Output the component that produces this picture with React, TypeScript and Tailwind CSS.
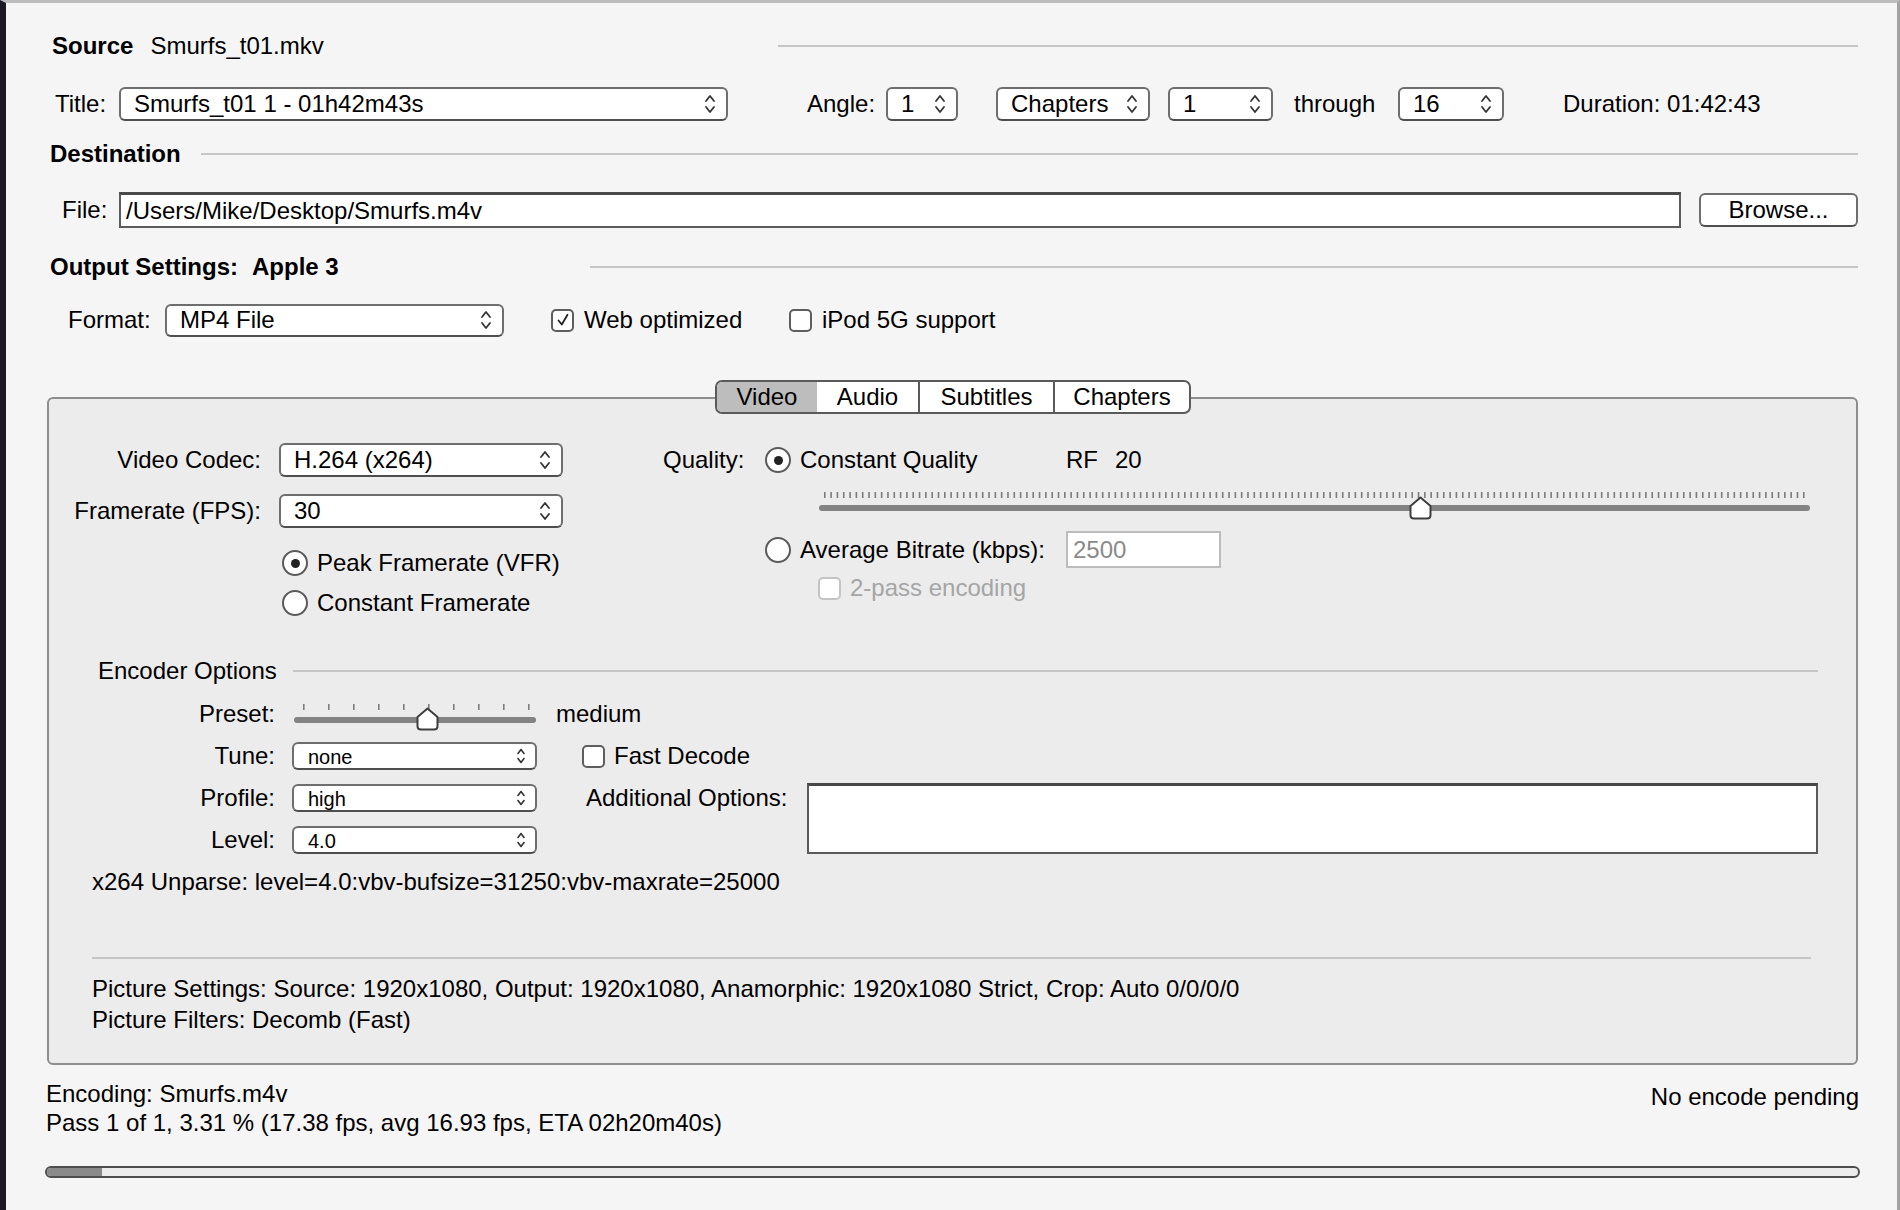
import React from "react";

function Stepper({ small = false }: { small?: boolean }) {
  return small ? (
    <svg width="10" height="18" viewBox="0 0 10 18" className="shrink-0">
      <path d="M2 6.5 L5 2.5 L8 6.5 M2 11.5 L5 15.5 L8 11.5" fill="none" stroke="#333" strokeWidth="1.6" strokeLinecap="round" strokeLinejoin="round" />
    </svg>
  ) : (
    <svg width="12" height="24" viewBox="0 0 12 24" className="shrink-0">
      <path d="M2 9 L6 4 L10 9 M2 15 L6 20 L10 15" fill="none" stroke="#333" strokeWidth="1.8" strokeLinecap="round" strokeLinejoin="round" />
    </svg>
  );
}

function Select({ cls, value }: { cls: string; value: string }) {
  return (
    <div className={`flex items-center justify-between bg-white border-2 border-[#6e6e6e] border-b-[#4e4e4e] rounded-[6px] pl-[13px] pr-[10px] shrink-0 ${cls}`}>
      <span className="leading-none whitespace-nowrap">{value}</span>
      <Stepper />
    </div>
  );
}

function SmallSelect({ value }: { value: string }) {
  return (
    <div className="ml-[17px] w-[245px] h-[28px] flex items-center justify-between bg-white border-2 border-[#6e6e6e] border-b-[#4e4e4e] rounded-[6px] pl-[14px] pr-[9px]">
      <span className="leading-none text-[20px] pt-[2px]">{value}</span>
      <Stepper small />
    </div>
  );
}

function Checkbox({ checked = false, disabled = false }: { checked?: boolean; disabled?: boolean }) {
  return (
    <div
      className={`w-[23px] h-[23px] rounded-[5px] border-2 bg-white flex items-center justify-center shrink-0 ${
        disabled ? "border-[#c4c4c4]" : "border-[#5e5e5e]"
      }`}
    >
      {checked && (
        <svg width="16" height="16" viewBox="0 0 16 16">
          <path d="M3.5 8.5 L6.8 12.5 L12.5 2.8" fill="none" stroke="#222" strokeWidth="1.8" strokeLinecap="round" strokeLinejoin="round" />
        </svg>
      )}
    </div>
  );
}

function Radio({ checked = false }: { checked?: boolean }) {
  return (
    <div className="w-[26px] h-[26px] rounded-full border-2 border-[#5a5a5a] bg-white flex items-center justify-center shrink-0">
      {checked && <div className="w-[9px] h-[9px] rounded-full bg-[#222]" />}
    </div>
  );
}

function Thumb() {
  return (
    <svg width="23" height="24" viewBox="0 0 23 24">
      <path d="M1.5 10 L11.5 1.5 L21.5 10 V19 Q21.5 22.5 18 22.5 H5 Q1.5 22.5 1.5 19 Z" fill="#fff" stroke="#3e3e3e" strokeWidth="2" strokeLinejoin="round" />
    </svg>
  );
}

function QualitySlider() {
  const n = 156;
  const ticks = Array.from({ length: n }, (_, i) => 5 + (i * (979 / (n - 1))));
  return (
    <div className="relative ml-[156px] w-[991px] h-[30px]">
      <svg width="991" height="30" viewBox="0 0 991 30" className="absolute left-0 top-0">
        {ticks.map((x, i) => (
          <rect key={i} x={x} y={2} width={1.6} height={6} fill="#7c7c7c" />
        ))}
        <rect x={0} y={15} width={991} height={6} rx={3} fill="#838383" />
      </svg>
      <div className="absolute left-[590px] top-[6px]">
        <Thumb />
      </div>
    </div>
  );
}

function PresetSlider() {
  const ticks = Array.from({ length: 10 }, (_, i) => 9 + i * 25);
  return (
    <div className="relative ml-[19px] w-[242px] h-[28px]">
      <svg width="242" height="28" viewBox="0 0 242 28" className="absolute left-0 top-0">
        {ticks.map((x, i) => (
          <rect key={i} x={x} y={4} width={1.6} height={6} fill="#7c7c7c" />
        ))}
        <rect x={0} y={17} width={242} height={6} rx={3} fill="#838383" />
      </svg>
      <div className="absolute left-[122px] top-[7px]">
        <Thumb />
      </div>
    </div>
  );
}

export default function App() {
  return (
    <div className="w-[1900px] h-[1210px] overflow-hidden bg-[#f5f5f5] border-l-[6px] border-l-[#1c1922] border-t-[3px] border-t-[#bdbdbd] border-r-[3px] border-r-[#a3a3a3] font-['Liberation_Sans',Arial,sans-serif] text-[24px] text-black leading-none">
      <div className="pl-[41px] pr-[39px]">
        {/* Source */}
        <div className="mt-[26px] h-[34px] flex items-center pl-[5px]">
          <span className="font-bold">Source</span>
          <span className="ml-[17px]">Smurfs_t01.mkv</span>
          <div className="ml-auto w-[1080px] h-[2px] bg-[#c6c6c6]" />
        </div>

        {/* Title row */}
        <div className="mt-[24px] h-[34px] flex items-center pl-[8px]">
          <span className="w-[64px] shrink-0">Title:</span>
          <Select cls="w-[609px] h-[34px]" value="Smurfs_t01 1 - 01h42m43s" />
          <span className="ml-[79px] w-[79px] shrink-0">Angle:</span>
          <Select cls="w-[72px] h-[34px]" value="1" />
          <Select cls="ml-[38px] w-[154px] h-[34px]" value="Chapters" />
          <Select cls="ml-[18px] w-[105px] h-[34px]" value="1" />
          <span className="ml-[21px] w-[104px] shrink-0">through</span>
          <Select cls="w-[106px] h-[34px]" value="16" />
          <span className="ml-[59px] whitespace-nowrap">Duration: 01:42:43</span>
        </div>

        {/* Destination */}
        <div className="mt-[18px] h-[30px] flex items-center pl-[3px]">
          <span className="w-[151px] shrink-0 font-bold">Destination</span>
          <div className="flex-1 h-[2px] bg-[#c6c6c6]" />
        </div>

        {/* File */}
        <div className="mt-[22px] h-[38px] flex items-center pl-[15px]">
          <span className="w-[57px] shrink-0">File:</span>
          <div className="w-[1562px] h-[36px] bg-white border-2 border-[#5c5c5c] border-t-[3px] border-t-[#4a4a4a] flex items-center pl-[5px]">
            /Users/Mike/Desktop/Smurfs.m4v
          </div>
          <div className="ml-[18px] w-[159px] h-[34px] bg-white border-2 border-[#6e6e6e] border-b-[#4e4e4e] rounded-[6px] flex items-center justify-center">
            Browse...
          </div>
        </div>

        {/* Output settings */}
        <div className="mt-[23px] h-[30px] flex items-center pl-[3px]">
          <span className="w-[202px] shrink-0 font-bold">Output Settings:</span>
          <span className="w-[338px] shrink-0 font-bold">Apple 3</span>
          <div className="flex-1 h-[2px] bg-[#c6c6c6]" />
        </div>

        {/* Format */}
        <div className="mt-[21px] h-[34px] flex items-center pl-[21px]">
          <span className="w-[97px] shrink-0">Format:</span>
          <Select cls="w-[339px] h-[33px]" value="MP4 File" />
          <div className="ml-[47px]">
            <Checkbox checked />
          </div>
          <span className="ml-[10px] w-[205px] shrink-0">Web optimized</span>
          <Checkbox />
          <span className="ml-[10px]">iPod 5G support</span>
        </div>

        {/* Tabs */}
        <div className="mt-[43px] pl-[668px] relative z-10 flex">
          <div className="flex h-[34px] border-2 border-[#5a5a5a] rounded-[7px] overflow-hidden bg-white">
            <div className="w-[100px] bg-[#bdbdbd] flex items-center justify-center">Video</div>
            <div className="w-[101px] flex items-center justify-center">Audio</div>
            <div className="w-[135px] border-l-2 border-[#5a5a5a] flex items-center justify-center">Subtitles</div>
            <div className="w-[136px] border-l-2 border-[#5a5a5a] flex items-center justify-center">Chapters</div>
          </div>
        </div>

        <div className="-mt-[17px] h-[668px] border-2 border-[#8e8e8e] rounded-[6px] bg-[#ececec]">
          {/* top section */}
          <div className="flex pt-[44px]">
            <div className="w-[614px] shrink-0 flex flex-col">
              <div className="h-[34px] flex items-center">
                <span className="w-[212px] text-right shrink-0">Video Codec:</span>
                <Select cls="ml-[18px] w-[284px] h-[34px]" value="H.264 (x264)" />
              </div>
              <div className="mt-[17px] h-[34px] flex items-center">
                <span className="w-[212px] text-right shrink-0">Framerate (FPS):</span>
                <Select cls="ml-[18px] w-[284px] h-[34px]" value="30" />
              </div>
              <div className="mt-[20px] h-[30px] flex items-center pl-[233px]">
                <Radio checked />
                <span className="ml-[9px]">Peak Framerate (VFR)</span>
              </div>
              <div className="mt-[10px] h-[30px] flex items-center pl-[233px]">
                <Radio />
                <span className="ml-[9px]">Constant Framerate</span>
              </div>
            </div>
            <div className="flex-1 flex flex-col">
              <div className="h-[34px] flex items-center">
                <span className="w-[102px] shrink-0">Quality:</span>
                <Radio checked />
                <span className="ml-[9px] w-[266px] shrink-0">Constant Quality</span>
                <span className="w-[49px] shrink-0">RF</span>
                <span>20</span>
              </div>
              <div className="mt-[13px]">
                <QualitySlider />
              </div>
              <div className="mt-[11px] h-[37px] flex items-center pl-[102px]">
                <Radio />
                <span className="ml-[9px] w-[266px] shrink-0">Average Bitrate (kbps):</span>
                <div className="w-[155px] h-[37px] bg-white border-2 border-[#bcbcbc] flex items-center pl-[5px] text-[#8a8a8a]">
                  2500
                </div>
              </div>
              <div className="mt-[8px] h-[24px] flex items-center pl-[155px]">
                <Checkbox disabled />
                <span className="ml-[9px] text-[#a5a5a5]">2-pass encoding</span>
              </div>
            </div>
          </div>

          {/* Encoder options */}
          <div className="mt-[38px] h-[30px] flex items-center pl-[49px] pr-[38px]">
            <span className="w-[195px] shrink-0">Encoder Options</span>
            <div className="flex-1 h-[2px] bg-[#c6c6c6]" />
          </div>

          <div className="mt-[14px] grid grid-cols-[226px_262px_1fr] grid-rows-[28px_28px_28px_28px] gap-y-[14px] pr-[38px]">
            <div className="flex items-center justify-end">Preset:</div>
            <div className="flex items-center">
              <PresetSlider />
            </div>
            <div className="flex items-center pl-[19px]">medium</div>

            <div className="flex items-center justify-end">Tune:</div>
            <div className="flex items-center">
              <SmallSelect value="none" />
            </div>
            <div className="flex items-center pl-[45px]">
              <Checkbox />
              <span className="ml-[9px]">Fast Decode</span>
            </div>

            <div className="flex items-center justify-end">Profile:</div>
            <div className="flex items-center">
              <SmallSelect value="high" />
            </div>
            <div className="row-span-2 flex items-start pl-[49px]">
              <div className="w-[221px] h-[28px] flex items-center shrink-0">Additional Options:</div>
              <div className="flex-1 h-[71px] -mt-[1px] bg-white border-2 border-[#5a5a5a] border-t-[3px] border-t-[#484848]" />
            </div>

            <div className="flex items-center justify-end">Level:</div>
            <div className="flex items-center">
              <SmallSelect value="4.0" />
            </div>
          </div>

          <div className="mt-[14px] h-[28px] flex items-center pl-[43px]">
            x264 Unparse: level=4.0:vbv-bufsize=31250:vbv-maxrate=25000
          </div>

          <div className="mt-[61px] ml-[43px] mr-[45px] h-[2px] bg-[#c6c6c6]" />

          <div className="mt-[16px] h-[28px] flex items-center pl-[43px]">
            Picture Settings: Source: 1920x1080, Output: 1920x1080, Anamorphic: 1920x1080 Strict, Crop: Auto 0/0/0/0
          </div>
          <div className="mt-[3px] h-[28px] flex items-center pl-[43px]">Picture Filters: Decomb (Fast)</div>
        </div>

        {/* Status */}
        <div className="mt-[15px] flex justify-between">
          <div className="flex flex-col -ml-[1px]">
            <div className="h-[28px] flex items-center">Encoding: Smurfs.m4v</div>
            <div className="mt-[1px] h-[28px] flex items-center">Pass 1 of 1, 3.31 % (17.38 fps, avg 16.93 fps, ETA 02h20m40s)</div>
          </div>
          <div className="mt-[3px] h-[28px] flex items-center -mr-[1px]">No encode pending</div>
        </div>

        <div className="mt-[29px] -mx-[2px] h-[12px] rounded-full border-2 border-[#4e4e4e] bg-[#ececec] overflow-hidden flex">
          <div className="w-[55px] h-full bg-[#8a8a8a]" />
        </div>
      </div>
    </div>
  );
}
